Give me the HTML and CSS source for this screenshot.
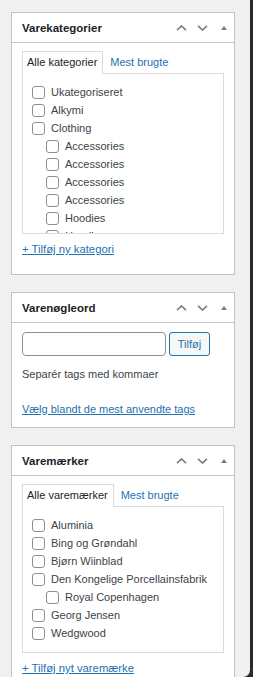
FILE: index.html
```html
<!DOCTYPE html>
<html>
<head>
  <title>Produkt sidebar</title>
  <link rel="stylesheet" href="styles.css">
</head>
<body>
  <div class="page">

    <div class="postbox">
      <div class="postbox-header">
        <h2>Varekategorier</h2>
        <div class="handle-actions">
          <button class="handle-btn"><svg width="11" height="6" viewBox="0 0 11 6"><polyline points="1,5.2 5.5,1 10,5.2" /></svg></button>
          <button class="handle-btn"><svg width="11" height="6" viewBox="0 0 11 6"><polyline points="1,0.8 5.5,5 10,0.8" /></svg></button>
          <button class="handle-btn"><svg width="6" height="4" viewBox="0 0 6 4"><polygon points="0,4 3,0 6,4" /></svg></button>
        </div>
      </div>
      <div class="inside">
        <ul class="tabs">
          <li class="tab active">Alle kategorier</li>
          <li class="tab"><a href="#">Mest brugte</a></li>
        </ul>
        <div class="tabs-panel cat-panel">
          <ul class="checklist">
            <li><label><input type="checkbox">Ukategoriseret</label></li>
            <li><label><input type="checkbox">Alkymi</label></li>
            <li><label><input type="checkbox">Clothing</label>
              <ul class="children">
                <li><label><input type="checkbox">Accessories</label></li>
                <li><label><input type="checkbox">Accessories</label></li>
                <li><label><input type="checkbox">Accessories</label></li>
                <li><label><input type="checkbox">Accessories</label></li>
                <li><label><input type="checkbox">Hoodies</label></li>
                <li><label><input type="checkbox">Hoodies</label></li>
                <li><label><input type="checkbox">Tshirts</label></li>
              </ul>
            </li>
            <li><label><input type="checkbox">Decor</label></li>
          </ul>
        </div>
        <p class="add-link"><a href="#">+ Tilføj ny kategori</a></p>
      </div>
    </div>

    <div class="postbox">
      <div class="postbox-header">
        <h2>Varenøgleord</h2>
        <div class="handle-actions">
          <button class="handle-btn"><svg width="11" height="6" viewBox="0 0 11 6"><polyline points="1,5.2 5.5,1 10,5.2" /></svg></button>
          <button class="handle-btn"><svg width="11" height="6" viewBox="0 0 11 6"><polyline points="1,0.8 5.5,5 10,0.8" /></svg></button>
          <button class="handle-btn"><svg width="6" height="4" viewBox="0 0 6 4"><polygon points="0,4 3,0 6,4" /></svg></button>
        </div>
      </div>
      <div class="inside tags-inside">
        <div class="tag-add">
          <input type="text" class="tag-input">
          <button class="tag-btn">Tilføj</button>
        </div>
        <p class="howto">Separér tags med kommaer</p>
        <p class="cloud-link"><a href="#">Vælg blandt de mest anvendte tags</a></p>
      </div>
    </div>

    <div class="postbox">
      <div class="postbox-header">
        <h2>Varemærker</h2>
        <div class="handle-actions">
          <button class="handle-btn"><svg width="11" height="6" viewBox="0 0 11 6"><polyline points="1,5.2 5.5,1 10,5.2" /></svg></button>
          <button class="handle-btn"><svg width="11" height="6" viewBox="0 0 11 6"><polyline points="1,0.8 5.5,5 10,0.8" /></svg></button>
          <button class="handle-btn"><svg width="6" height="4" viewBox="0 0 6 4"><polygon points="0,4 3,0 6,4" /></svg></button>
        </div>
      </div>
      <div class="inside">
        <ul class="tabs">
          <li class="tab active">Alle varemærker</li>
          <li class="tab"><a href="#">Mest brugte</a></li>
        </ul>
        <div class="tabs-panel">
          <ul class="checklist">
            <li><label><input type="checkbox">Aluminia</label></li>
            <li><label><input type="checkbox">Bing og Grøndahl</label></li>
            <li><label><input type="checkbox">Bjørn Wiinblad</label></li>
            <li><label><input type="checkbox">Den Kongelige Porcellainsfabrik</label>
              <ul class="children">
                <li><label><input type="checkbox">Royal Copenhagen</label></li>
              </ul>
            </li>
            <li><label><input type="checkbox">Georg Jensen</label></li>
            <li><label><input type="checkbox">Wedgwood</label></li>
          </ul>
        </div>
        <p class="add-link"><a href="#">+ Tilføj nyt varemærke</a></p>
      </div>
    </div>

  </div>
</body>
</html>
```

FILE: styles.css
```css
* {
  box-sizing: border-box;
}

html {
  background: #2a2a2a;
}

body {
  margin: 0;
  font-family: "Liberation Sans", Arial, sans-serif;
  font-size: 11px;
  color: #3c434a;
}

.page {
  width: 250px;
  height: 677px;
  overflow: hidden;
  background: #f0f0f1;
  border-bottom-right-radius: 7px;
  padding: 12px 0 0 11px;
}

a {
  color: #2271b1;
}

ul {
  list-style: none;
  margin: 0;
  padding: 0;
}

/* meta box */
.postbox {
  width: 224px;
  background: #fff;
  border: 1px solid #c3c4c7;
  margin-bottom: 17px;
}

.postbox-header {
  display: flex;
  align-items: center;
  justify-content: space-between;
  height: 30px;
  border-bottom: 1px solid #c3c4c7;
}

.postbox-header h2 {
  margin: 0;
  padding-left: 10px;
  font-size: 11.5px;
  font-weight: bold;
  color: #1d2327;
}

.handle-actions {
  display: flex;
  align-self: stretch;
}

.handle-btn {
  width: 21px;
  padding: 0;
  border: 0;
  background: none;
  display: flex;
  align-items: center;
  justify-content: center;
}

.handle-btn svg polyline {
  fill: none;
  stroke: #787c82;
  stroke-width: 1.6;
}

.handle-btn svg polygon {
  fill: #787c82;
}

.inside {
  padding: 8px 10px 16px;
}

/* tabs */
.tabs {
  display: flex;
}

.tab {
  line-height: 21px;
  padding: 0 5px 0 6px;
  border: 1px solid transparent;
  border-bottom: 0;
}

.tab a {
  text-decoration: none;
}

.tab.active {
  position: relative;
  background: #fff;
  border-color: #dcdcde;
  margin-bottom: -1px;
  height: 23px;
  padding-left: 4px;
  color: #1d2327;
}

.tabs-panel {
  border: 1px solid #dcdcde;
  padding: 9px 10px 10px 9px;
}

.cat-panel {
  height: 161px;
  overflow-y: auto;
  scrollbar-width: none;
}

.checklist li label {
  display: flex;
  align-items: center;
  height: 18px;
}

.checklist .children {
  padding-left: 14px;
}

.checklist input {
  appearance: none;
  width: 13px;
  height: 13px;
  margin: 0 6px 0 0;
  border: 1px solid #8c8f94;
  border-radius: 3px;
  background: #fff;
}

.add-link {
  margin: 6px 0 0;
  line-height: 18px;
  font-size: 11.3px;
}

/* tags box */
.tags-inside {
  padding: 9px 10px 9px;
}

.tag-add {
  display: flex;
  gap: 3px;
}

.tag-input {
  width: 144px;
  height: 24px;
  border: 1px solid #8c8f94;
  border-radius: 4px;
  margin: 0;
}

.tag-btn {
  width: 41px;
  height: 24px;
  padding: 0;
  border: 1px solid #2271b1;
  border-radius: 3px;
  background: #f6f7f7;
  color: #2271b1;
  font-family: inherit;
  font-size: 11px;
}

.howto {
  margin: 9px 0 0;
  line-height: 18px;
}

.cloud-link {
  margin: 17px 0 0;
  line-height: 18px;
}
```
